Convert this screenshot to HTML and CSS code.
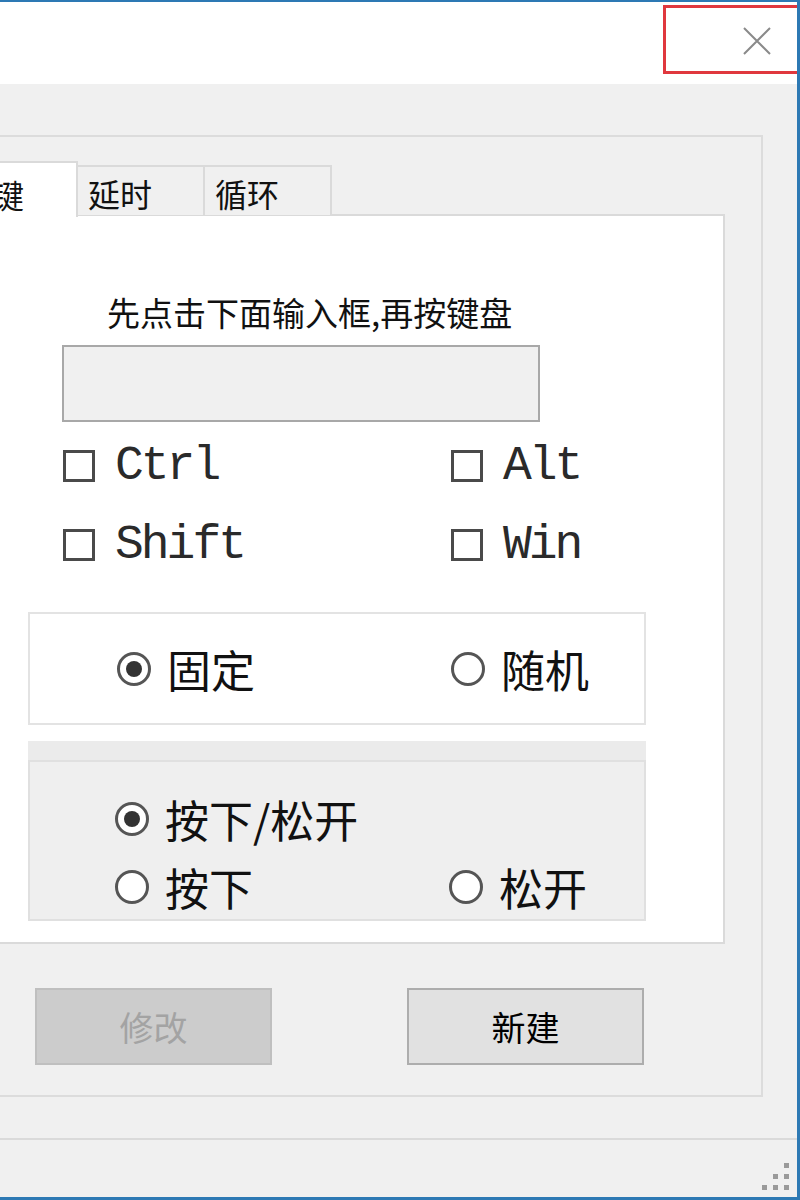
FILE: index.html
```html
<!DOCTYPE html>
<html>
<head>
<meta charset="utf-8">
<title>按键设置</title>
<link rel="stylesheet" href="styles.css">
</head>
<body>

<div class="window">
    <div class="titlebar">
        <div class="close">
            <svg width="28" height="28" viewBox="0 0 28 28"><path d="M1 1L27 27M27 1L1 27" stroke="#8a8a8a" stroke-width="2" fill="none"/></svg>
        </div>
    </div>

    <div class="main">
        <div class="frame">
            <ul class="tabs">
                <li class="tab active">按键</li>
                <li class="tab">延时</li>
                <li class="tab">循环</li>
            </ul>

            <div class="panel">
                <p class="hint">先点击下面输入框,再按键盘</p>
                <div class="keybox"></div>

                <div class="mods">
                    <label class="check"><span class="box"></span>Ctrl</label>
                    <label class="check"><span class="box"></span>Alt</label>
                    <label class="check"><span class="box"></span>Shift</label>
                    <label class="check"><span class="box"></span>Win</label>
                </div>

                <div class="group">
                    <label class="radio on"><span class="dot"></span>固定</label>
                    <label class="radio"><span class="dot"></span>随机</label>
                </div>

                <div class="group2">
                    <div class="group2-in">
                        <label class="radio on wide"><span class="dot"></span>按下/松开</label>
                        <label class="radio"><span class="dot"></span>按下</label>
                        <label class="radio"><span class="dot"></span>松开</label>
                    </div>
                </div>
            </div>

            <div class="buttons">
                <button class="btn" disabled>修改</button>
                <button class="btn">新建</button>
            </div>
        </div>
    </div>

    <div class="status">
        <svg class="grip" width="28" height="28" viewBox="0 0 28 28">
            <rect x="22" y="1" width="5" height="5" fill="#9a9a9a"/>
            <rect x="11" y="12" width="5" height="5" fill="#9a9a9a"/>
            <rect x="22" y="12" width="5" height="5" fill="#9a9a9a"/>
            <rect x="0" y="23" width="5" height="5" fill="#9a9a9a"/>
            <rect x="11" y="23" width="5" height="5" fill="#9a9a9a"/>
            <rect x="22" y="23" width="5" height="5" fill="#9a9a9a"/>
        </svg>
    </div>
</div>

</body>
</html>
```

FILE: styles.css
```css
body,div,ul,li,p{margin:0;padding:0;}
body{width:800px;height:1200px;overflow:hidden;background:#f0f0f0;font:34px/40px "Noto Sans CJK SC",sans-serif;color:#111;}
ul{list-style-type:none;}

.window{height:1200px;box-sizing:border-box;border-top:2px solid #2d79b4;border-right:3px solid #2d79b4;border-bottom:3px solid #2d79b4;display:flex;flex-direction:column;}

/* title bar */
.titlebar{height:82px;background:#fff;display:flex;justify-content:flex-end;}
.close{width:134px;height:69px;margin-top:3px;box-sizing:border-box;border:3px solid #e0383e;border-right:none;padding:19px 0 0 77px;}
.close svg{display:block;}

/* outer frame */
.main{padding-top:51px;}
.frame{margin-left:-75px;width:838px;box-sizing:border-box;border:2px solid #dcdcdc;padding:23px 36px 30px 18px;}

.tabs{display:flex;align-items:flex-end;height:55px;position:relative;z-index:1;}
.tab{box-sizing:border-box;width:127px;height:50px;padding:6px 0 0 10px;line-height:40px;font-size:32px;border-top:2px solid #dadada;border-right:2px solid #dadada;background:#f0f0f0;}
.tab.active{width:133px;height:56px;margin-bottom:-2px;padding:11px 0 0 13px;background:#fff;border:2px solid #dadada;border-bottom:none;}

.panel{box-sizing:border-box;width:780px;height:730px;margin-top:-1px;background:#fff;border:2px solid #dadada;padding-top:76px;}
.hint{margin-left:160px;font-size:33px;}
.keybox{width:478px;height:77px;box-sizing:border-box;margin:13px 0 0 115px;background:#f0f0f0;border:2px solid #a8a8a8;}

/* modifier checkboxes */
.mods{display:grid;grid-template-columns:388px auto;row-gap:19px;margin:14px 0 0 116px;}
.check{display:flex;align-items:center;box-sizing:border-box;height:60px;font:48px "Liberation Mono",monospace;letter-spacing:-3px;color:#2a2a2a;}
.check .box{width:32px;height:32px;box-sizing:border-box;border:3px solid #4a4a4a;margin-right:20px;}

/* radio groups */
.group{margin:37px 0 0 81px;width:618px;height:113px;box-sizing:border-box;background:#fff;border:2px solid #e3e3e3;display:grid;grid-template-columns:334px auto;align-items:center;padding-left:87px;}
.group2{margin:16px 0 0 81px;width:618px;height:180px;box-sizing:border-box;background:#ebebeb;padding-top:19px;}
.group2-in{height:161px;box-sizing:border-box;background:#efefef;border:2px solid #e0e0e0;display:grid;grid-template-columns:334px auto;grid-template-rows:56px 56px;row-gap:12px;padding:29px 0 0 85px;}
.group2-in .wide{grid-column:1 / 3;}

.radio{display:flex;align-items:center;font-size:44px;line-height:56px;}
.radio .dot{width:34px;height:34px;box-sizing:border-box;border:3px solid #555;border-radius:50%;margin-right:16px;display:flex;align-items:center;justify-content:center;background:#fff;}
.radio.on .dot::after{content:"";width:16px;height:16px;border-radius:50%;background:#333;}

/* action buttons */
.buttons{display:flex;gap:135px;margin:44px 0 0 90px;}
.btn{width:237px;height:77px;box-sizing:border-box;font:34px "Noto Sans CJK SC",sans-serif;background:#e1e1e1;border:2px solid #adadad;color:#000;padding:0;}
.btn[disabled]{background:#cccccc;border-color:#bfbfbf;color:#a3a3a3;}

/* status bar */
.status{margin-top:41px;flex:1;border-top:2px solid #dadada;display:flex;justify-content:flex-end;align-items:flex-end;padding:0 7px 7px 0;}
.grip{display:block;}
```
